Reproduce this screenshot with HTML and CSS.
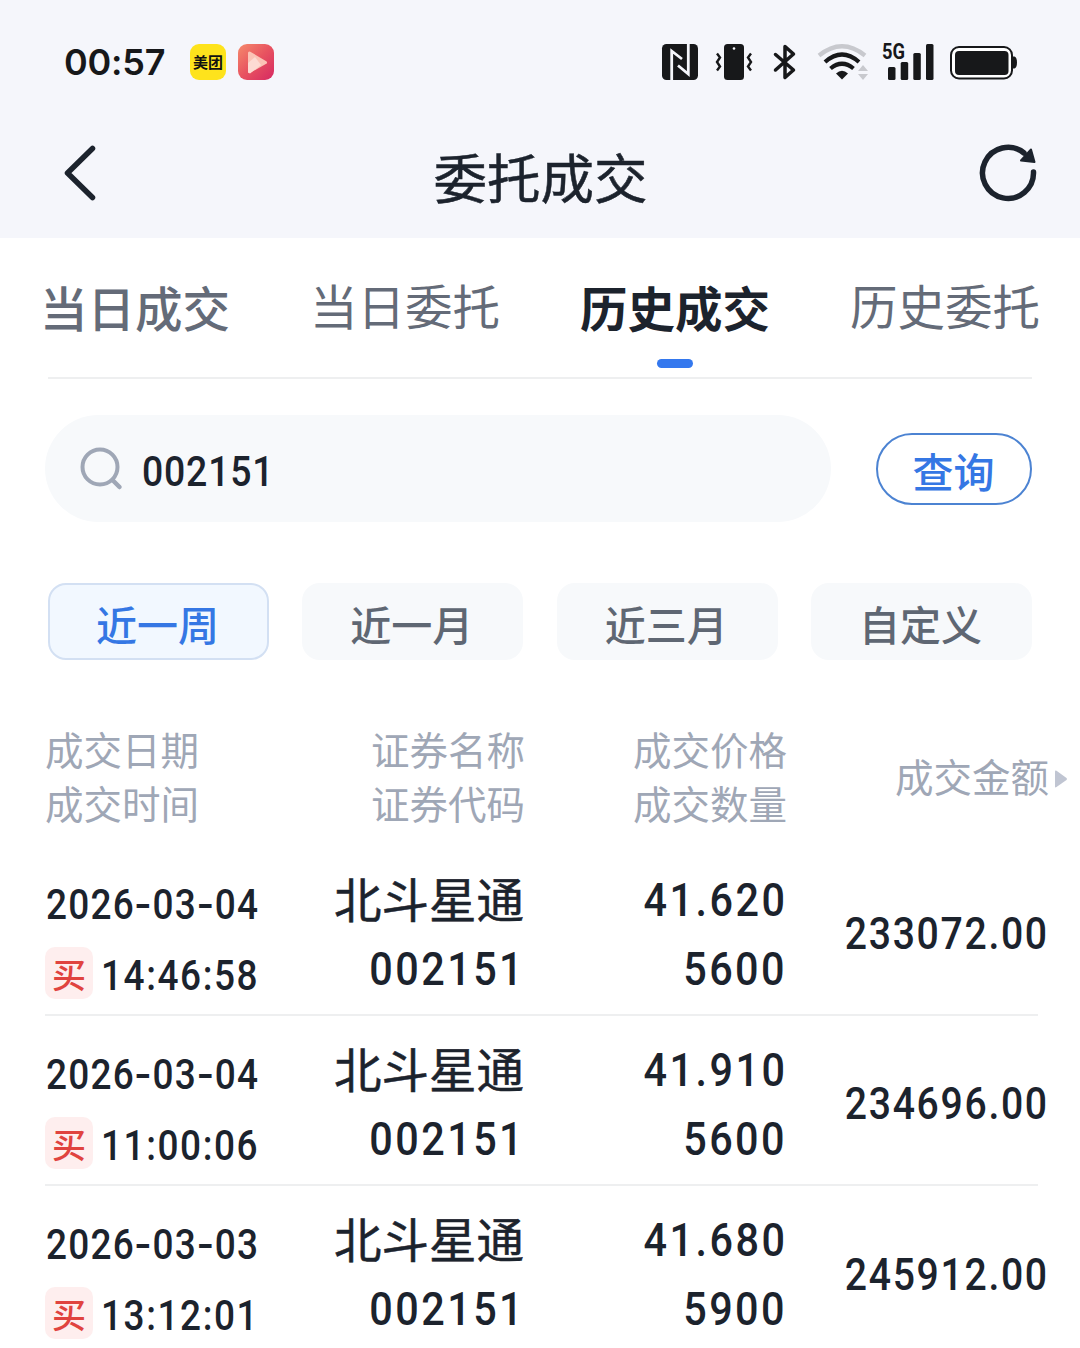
FILE: index.html
```
<!DOCTYPE html>
<html lang="zh-CN">
<head>
  <meta charset="UTF-8">
  <meta name="viewport" content="width=device-width, initial-scale=1.0">
  <title>委托成交</title>
  <link rel="stylesheet" href="styles.css">
</head>
<body>
  <header class="top">
    <div class="status-bar">
      <span class="clock">00:57</span>
      <span class="app-icon meituan">美团</span>
      <svg class="app-icon" viewBox="0 0 36 36">
        <defs>
          <linearGradient id="video-bg" x1="0" y1="0" x2="1" y2="1">
            <stop offset="0" stop-color="#f58a6c"/>
            <stop offset="0.5" stop-color="#e85360"/>
            <stop offset="1" stop-color="#d62862"/>
          </linearGradient>
        </defs>
        <rect width="36" height="36" rx="9" fill="url(#video-bg)"/>
        <path d="M11.5 9v18.500L27.500 18.500z" fill="#fbc3b6" stroke="#fbc3b6" stroke-width="3" stroke-linejoin="round"/>
        <path d="M10 19l7-6 6 8-11 8.500-2-1z" fill="#fddbd3"/>
      </svg>

      <div class="status-icons">
        <svg class="nfc" width="36" height="36" viewBox="0 0 36 36">
          <rect width="36" height="36" rx="4.500" fill="#17181a"/>
          <path d="M9.700 36V7l10.300 8M26.300 0v30L16 21.500" fill="none" stroke="#f5f6fb" stroke-width="2.800"/>
        </svg>
        <svg class="vibrate" width="36" height="36" viewBox="0 0 36 36">
          <rect x="8" width="20" height="36" rx="3.500" fill="#17181a"/>
          <circle cx="18" cy="4.500" r="1.300" fill="#f5f6fb"/>
          <path d="M1 9.500l3 4-3 4.500 3 4.500-3 4M35 9.500l-3 4 3 4.500-3 4.500 3 4" fill="none" stroke="#17181a" stroke-width="2.400"/>
        </svg>
        <svg class="bluetooth" width="22" height="36" viewBox="0 0 22 36">
          <path d="M1.500 10.500L19.500 26 11 33.500v-31L19.500 10 1.500 26" fill="none" stroke="#17181a" stroke-width="3.500" stroke-linejoin="round" stroke-linecap="round"/>
        </svg>
        <svg class="wifi" width="52" height="36" viewBox="0 0 52 36">
          <g fill="none" stroke="#17181a" stroke-width="4.200">
            <path d="M2 11.500Q25 -7 48 11.500" stroke="#c8c9ce"/>
            <path d="M8 18Q25 3 42 18"/>
            <path d="M13.500 24.500Q25 15 36.500 24.500"/>
          </g>
          <path d="M19 29.500Q25 24 31 29.500L25 35.500z" fill="#17181a"/>
          <path d="M41 27l5-6 5 6zM41 30h10l-5 6z" fill="#c8c9ce"/>
        </svg>
        <svg class="signal" width="52" height="40" viewBox="0 0 52 40">
          <text class="network" x="0" y="17" textLength="23" lengthAdjust="spacingAndGlyphs">5G</text>
          <g fill="#17181a">
            <rect x="6" y="25" width="7.500" height="13" rx="1.500"/>
            <rect x="18.700" y="20" width="7.500" height="18" rx="1.500"/>
            <rect x="31.300" y="11" width="7.500" height="27" rx="1.500"/>
            <rect x="44" y="2" width="7.500" height="36" rx="1.500"/>
          </g>
        </svg>
        <svg class="battery" width="68" height="36" viewBox="0 0 68 36">
          <rect x="1" y="3" width="61" height="31.500" rx="8" fill="#fff" stroke="#17181a" stroke-width="2"/>
          <rect x="5" y="7" width="53.500" height="24" rx="4" fill="#17181a"/>
          <path d="M63 12.500h1.500q2.500 1 2.500 6t-2.500 6H63z" fill="#17181a"/>
        </svg>
      </div>
    </div>

    <div class="nav-bar">
      <svg class="back" width="34" height="56" viewBox="0 0 34 56">
        <path d="M29.500 3.500L4.500 28 29.500 52.500" fill="none" stroke="#1c232d" stroke-width="5.500" stroke-linecap="round" stroke-linejoin="round"/>
      </svg>
      <h1>委托成交</h1>
      <svg class="refresh" width="60" height="60" viewBox="0 0 60 60">
        <path d="M55.500 29A25.500 25.500 0 1 1 46 10" fill="none" stroke="#1c232d" stroke-width="5.500" stroke-linecap="round"/>
        <path d="M53 6.500l3.500 12.500-13.500-1.500z" fill="#1c232d" stroke="#1c232d" stroke-width="2" stroke-linejoin="round"/>
      </svg>
    </div>
  </header>

  <nav class="tabs">
    <a class="tab visited">当日成交</a>
    <a class="tab">当日委托</a>
    <a class="tab active">历史成交</a>
    <a class="tab">历史委托</a>
  </nav>

  <div class="search">
    <div class="search-box">
      <svg width="44" height="44" viewBox="0 0 44 44">
        <circle cx="20" cy="20" r="17.500" fill="none" stroke="#9fa7b6" stroke-width="4"/>
        <path d="M33 33.500l6.500 6.500" stroke="#9fa7b6" stroke-width="4.500" stroke-linecap="round"/>
      </svg>
      <span class="keyword">002151</span>
    </div>
    <button class="query">查询</button>
  </div>

  <div class="ranges">
    <button class="range selected">近一周</button>
    <button class="range">近一月</button>
    <button class="range">近三月</button>
    <button class="range">自定义</button>
  </div>

  <div class="row head">
    <div class="cell left"><span>成交日期</span><span>成交时间</span></div>
    <div class="cell"><span>证券名称</span><span>证券代码</span></div>
    <div class="cell"><span>成交价格</span><span>成交数量</span></div>
    <div class="cell last">
      <span>成交金额</span>
      <svg class="more" width="12" height="18" viewBox="0 0 12 18"><path d="M0 1.500v15q0 1.500 1.500.5L11.500 10q1-1 0-2L1.500.8Q0 0 0 1.500z" fill="#c0c5d2"/></svg>
    </div>
  </div>

  <div class="row">
    <div class="cell left">
      <span class="date">2026<i>-</i>03<i>-</i>04</span>
      <span class="when"><b class="buy">买</b><span class="time">14:46:58</span></span>
    </div>
    <div class="cell"><span class="name">北斗星通</span><span class="num">002151</span></div>
    <div class="cell"><span class="num price">41.620</span><span class="num qty">5600</span></div>
    <div class="cell last"><span class="amount">233072.00</span></div>
  </div>

  <div class="row">
    <div class="cell left">
      <span class="date">2026<i>-</i>03<i>-</i>04</span>
      <span class="when"><b class="buy">买</b><span class="time">11:00:06</span></span>
    </div>
    <div class="cell"><span class="name">北斗星通</span><span class="num">002151</span></div>
    <div class="cell"><span class="num price">41.910</span><span class="num qty">5600</span></div>
    <div class="cell last"><span class="amount">234696.00</span></div>
  </div>

  <div class="row">
    <div class="cell left">
      <span class="date">2026<i>-</i>03<i>-</i>03</span>
      <span class="when"><b class="buy">买</b><span class="time">13:12:01</span></span>
    </div>
    <div class="cell"><span class="name">北斗星通</span><span class="num">002151</span></div>
    <div class="cell"><span class="num price">41.680</span><span class="num qty">5900</span></div>
    <div class="cell last"><span class="amount">245912.00</span></div>
  </div>
</body>
</html>
```
FILE: styles.css
```
* {
  margin: 0;
  padding: 0;
  box-sizing: border-box;
}

body {
  width: 1080px;
  height: 1348px;
  overflow: hidden;
  background: #fff;
  color: #1c232d;
  font-family: Roboto, "Noto Sans CJK SC", sans-serif;
}

svg {
  display: block;
  flex: none;
  overflow: visible;
}

/* status bar + title */
.top {
  height: 238px;
  background: #f5f6fb;
}

.status-bar {
  display: flex;
  align-items: center;
  height: 124px;
  padding: 0 62px 0 64px;
}

.clock {
  width: 126px;
  font: 600 36px/40px Inter, sans-serif;
  letter-spacing: -0.2px;
  color: #17181a;
}

.app-icon {
  width: 36px;
  height: 36px;
  margin-right: 12px;
}

.meituan {
  border-radius: 9px;
  background: #fee31c;
  color: #111;
  font: 700 15px/35px "Noto Sans CJK SC", sans-serif;
  text-align: center;
}

.status-icons {
  display: flex;
  align-items: center;
  margin-left: auto;
}

.vibrate { margin-left: 18px; }
.bluetooth { margin-left: 22px; }
.wifi { margin-left: 21px; }
.signal { margin-left: 13px; }
.battery { margin-left: 16px; }

.network {
  font: 700 22px Roboto, sans-serif;
  fill: #17181a;
}

.nav-bar {
  display: flex;
  align-items: center;
  justify-content: space-between;
  height: 98px;
  padding: 0 42px 0 63px;
}

h1 {
  padding: 16px 0 0 6px;
  font-size: 53.500px;
  font-weight: 400;
  line-height: 60px;
  -webkit-text-stroke: 0.5px #1c232d;
}

/* tabs */
.tabs {
  display: flex;
  justify-content: space-between;
  width: 984px;
  height: 141px;
  margin-left: 48px;
  border-bottom: 2px solid #eeeff0;
}

.tab {
  flex: none;
  display: flex;
  flex-direction: column;
  align-items: center;
  width: 190px;
  padding-top: 41px;
  font-size: 47.500px;
  line-height: 60px;
  color: #646b78;
}

.tab:first-child { margin-left: -8px; }
.tab:last-child { margin-right: -8px; }

.visited {
  padding-top: 43px;
  font-weight: 500;
}

.active {
  padding-top: 43px;
  font-weight: 700;
  color: #1c232d;
}

.active::after {
  content: "";
  width: 36px;
  height: 9px;
  margin-top: 18px;
  border-radius: 5px;
  background: #3478ee;
}

/* search */
.search {
  display: flex;
  align-items: center;
  justify-content: space-between;
  height: 107px;
  margin: 36px 48px 0 45px;
}

.search-box {
  display: flex;
  align-items: center;
  width: 786px;
  height: 107px;
  padding-left: 35px;
  border-radius: 54px;
  background: #f7f9fb;
}

.keyword {
  margin-left: 18px;
  padding-top: 7px;
  font-size: 42.500px;
  font-weight: 500;
  line-height: 50px;
  letter-spacing: 0.9px;
  transform: scaleX(0.88);
  transform-origin: left;
}

.query {
  width: 156px;
  height: 72px;
  padding: 3px 1px 0 0;
  border: 2px solid #4c83d2;
  border-radius: 36px;
  background: #fff;
  color: #3577e4;
  font: 500 41px/60px "Noto Sans CJK SC", sans-serif;
}

/* date range */
.ranges {
  display: grid;
  grid-template-columns: repeat(4, 221px);
  justify-content: space-between;
  margin: 61px 48px 0;
}

.range {
  height: 77px;
  padding: 3px 2px 0 0;
  border: 2px solid #f7f9fb;
  border-radius: 18px;
  background: #f7f9fb;
  color: #5f6773;
  font: 500 41px/60px "Noto Sans CJK SC", sans-serif;
}

.selected {
  border-color: #d3e0f3;
  background: #f2f8ff;
  color: #3577e4;
}

/* table */
.row {
  display: grid;
  grid-template-columns: 225px 255px 262px 251px;
  width: 993px;
  height: 170px;
  margin-left: 45px;
  border-bottom: 2px solid #eeeff0;
}

.row:last-child {
  border-bottom: none;
}

.cell {
  display: flex;
  flex-direction: column;
  align-items: flex-end;
  white-space: nowrap;
}

.left {
  align-items: flex-start;
}

.last {
  margin-right: -10px;
  padding-top: 7px;
  justify-content: center;
}

.head {
  height: 186px;
  padding-top: 65px;
  border-bottom: none;
  color: #9fa7b6;
  font-size: 38.500px;
  line-height: 54px;
}

.head .last {
  flex-direction: row;
  align-items: center;
  justify-content: flex-end;
  height: 108px;
  margin-right: -29px;
  padding-top: 0;
}

.more {
  margin-left: 6px;
}

/* condensed digits */
.date,
.time {
  font-size: 42px;
  font-weight: 500;
  line-height: 50px;
  letter-spacing: 1.4px;
  transform: scaleX(0.88);
  transform-origin: left;
}

.date {
  margin: 34px 0 0 1px;
}

.date i {
  display: inline-block;
  width: 20px;
  font-style: normal;
  text-align: center;
  transform: scaleX(1.3);
}

.when {
  display: flex;
  align-items: center;
  margin-top: 15px;
}

.time {
  padding-top: 6px;
  letter-spacing: 1.800px;
}

.buy {
  width: 48px;
  height: 52px;
  margin-right: 8px;
  border-radius: 10px;
  background: #feeeee;
  color: #e0433f;
  font: 500 34px/54px "Noto Sans CJK SC", sans-serif;
  text-align: center;
}

.name {
  margin: 24px 1px 0 0;
  font-size: 47.500px;
  line-height: 64px;
  -webkit-text-stroke: 0.5px #1c232d;
}

.num {
  margin: 5px 0 0;
  font-size: 47px;
  font-weight: 500;
  line-height: 60px;
  letter-spacing: 2.800px;
  transform: scaleX(0.88);
  transform-origin: right;
}

.price {
  margin-top: 24px;
}

.qty {
  margin-top: 9px;
}

.amount {
  margin-right: -1px;
  font-size: 44.500px;
  font-weight: 500;
  line-height: 50px;
  letter-spacing: 1.900px;
  transform: scaleX(0.88);
  transform-origin: right;
}
```
